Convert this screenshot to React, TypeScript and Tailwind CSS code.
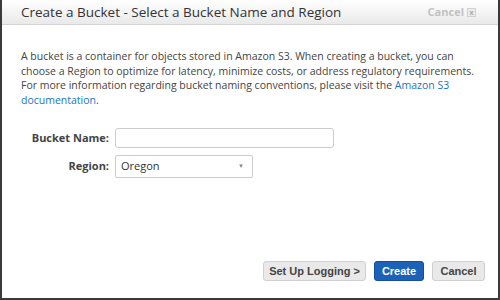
export default function App() {
  return (
    <div className="w-[500px] h-[300px] bg-white border-x-2 border-b-2 border-[#3a3a3a] flex flex-col overflow-hidden" style={{ fontFamily: '"Open Sans", sans-serif' }}>
      {/* header */}
      <div className="h-[25px] shrink-0 flex items-center justify-between pl-[19px] pr-[22px] bg-gradient-to-b from-white to-[#e9e9e9] border-b border-[#d4d4d4]">
        <span className="text-[13.5px] text-[#333]">Create a Bucket - Select a Bucket Name and Region</span>
        <span className="flex items-center gap-[3px] text-[11px] text-[#c2c2c2] font-bold">
          Cancel
          <span className="w-[9px] h-[9px] border border-[#d0d0d0] bg-[#ececec] text-[7px] leading-[7px] flex items-center justify-center text-[#aaa]">x</span>
        </span>
      </div>

      {/* body */}
      <div className="flex-1 flex flex-col pl-[19px] pr-[13px] pt-[24px]">
        <p className="text-[10.5px] leading-[14.5px] text-[#444]">
          A bucket is a container for objects stored in Amazon S3. When creating a bucket, you can choose a Region to optimize for latency, minimize costs, or address regulatory requirements. For more information regarding bucket naming conventions, please visit the{' '}
          <span className="text-[#1a73c8]">Amazon S3</span>{' '}
          <span className="text-[#1a73c8]">documentation</span>.
        </p>

        <div className="mt-[21px] grid grid-cols-[88px_auto] gap-x-[6px] gap-y-[7px] items-center">
          <label className="text-right text-[11px] font-bold text-[#444]">Bucket Name:</label>
          <div className="w-[219px] h-[20px] border border-[#ccc] rounded-[3px] bg-white" />
          <label className="text-right text-[11px] font-bold text-[#444]">Region:</label>
          <div className="w-[138px] h-[23px] border border-[#ccc] rounded-[2px] bg-white flex items-center justify-between pl-[5px] pr-[8px]">
            <span className="text-[11px] text-[#333]">Oregon</span>
            <span className="text-[6px] text-[#888]">▼</span>
          </div>
        </div>

        <div className="mt-auto mb-[17px] flex justify-end gap-[8px]" style={{ fontFamily: '"Liberation Sans", Arial, sans-serif' }}>
          <button className="h-[20px] w-[103px] rounded-[3px] bg-[#e9e9e9] border border-[#d0d0d0] text-[11px] font-bold text-[#444]">Set Up Logging &gt;</button>
          <button className="h-[20px] w-[50px] rounded-[3px] bg-[#1b62b8] border border-[#14509a] text-[11px] font-bold text-white">Create</button>
          <button className="h-[20px] w-[53px] rounded-[3px] bg-[#e9e9e9] border border-[#d0d0d0] text-[11px] font-bold text-[#444]">Cancel</button>
        </div>
      </div>
    </div>
  );
}
